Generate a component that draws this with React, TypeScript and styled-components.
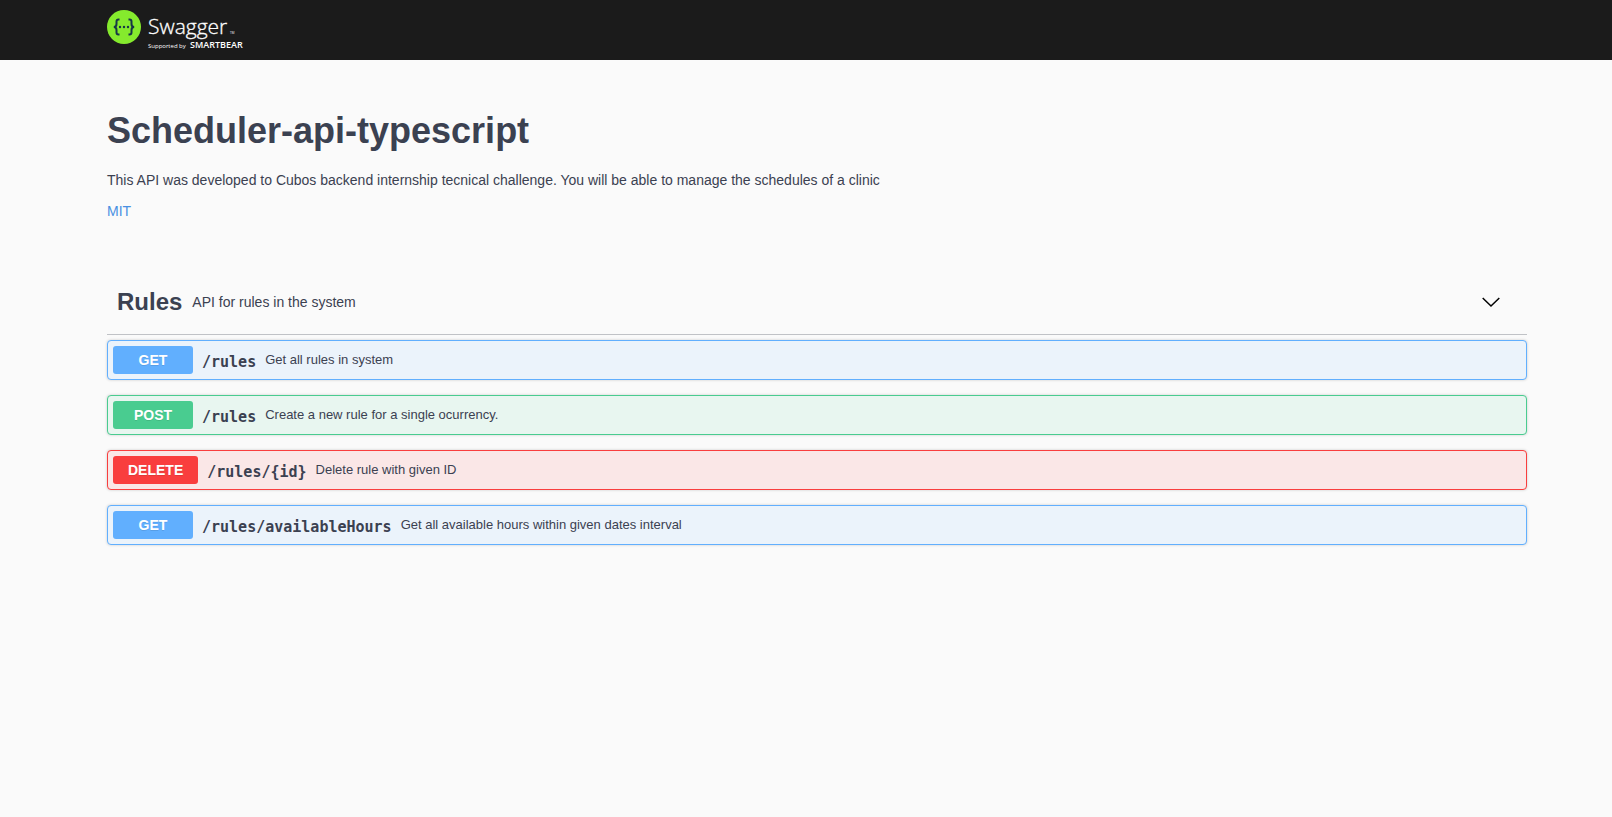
import React from "react";
import styled, { createGlobalStyle } from "styled-components";

type Method = "get" | "post" | "delete";

interface Operation {
  method: Method;
  path: string;
  summary: string;
}

const palette: Record<Method, { main: string; tint: string }> = {
  get: { main: "#61affe", tint: "#ebf3fb" },
  post: { main: "#49cc90", tint: "#e8f6f0" },
  delete: { main: "#f93e3e", tint: "#fae7e7" },
};

const operations: Operation[] = [
  { method: "get", path: "/rules", summary: "Get all rules in system" },
  { method: "post", path: "/rules", summary: "Create a new rule for a single ocurrency." },
  { method: "delete", path: "/rules/{id}", summary: "Delete rule with given ID" },
  {
    method: "get",
    path: "/rules/availableHours",
    summary: "Get all available hours within given dates interval",
  },
];

const GlobalStyle = createGlobalStyle`
  *, *::before, *::after { box-sizing: border-box; }
  body {
    margin: 0;
    background: #fafafa;
    color: #3b4151;
    font-family: Arial, "Liberation Sans", sans-serif;
    font-size: 14px;
  }
`;

const Topbar = styled.header`
  padding: 10px 0 10px 22px;
  background: #1b1b1b;
`;

const Wrapper = styled.div`
  width: 100%;
  max-width: 1460px;
  margin: 0 auto;
  padding: 0 20px;
`;

const LogoLink = styled.a`
  display: flex;
  width: fit-content;
`;

const LogoSvg = styled.svg`
  display: block;
  font-family: "Open Sans", sans-serif;
`;

const Main = styled.main`
  padding: 50px 0 50px 22px;
`;

const Info = styled.section`
  margin-bottom: 50px;
`;

const Title = styled.h1`
  margin: 0;
  font-size: 36px;
  line-height: 41px;
`;

const Description = styled.p`
  margin: 21px 0 15px;
  line-height: 16px;
`;

const License = styled.a`
  display: block;
  width: fit-content;
  color: #4990e2;
  line-height: 16px;
  text-decoration: none;
`;

const TagHeader = styled.div`
  display: flex;
  align-items: center;
  gap: 10px;
  height: 66px;
  margin-bottom: 5px;
  padding: 0 26px 0 10px;
  border-bottom: 1px solid rgba(59, 65, 81, 0.3);
`;

const TagName = styled.h2`
  margin: 0;
  font-size: 24px;
  line-height: 28px;
`;

const TagDescription = styled.p`
  flex: 1;
  margin: 0;
  line-height: 16px;
`;

const ToggleButton = styled.button`
  display: flex;
  padding: 0;
  border: 0;
  background: none;
  cursor: pointer;
`;

const OperationList = styled.div`
  display: flex;
  flex-direction: column;
  gap: 15px;
`;

const OperationRow = styled.button<{ $method: Method }>`
  display: flex;
  align-items: center;
  gap: 9px;
  width: 100%;
  padding: 5px;
  border: 1px solid ${({ $method }) => palette[$method].main};
  border-radius: 4px;
  background: ${({ $method }) => palette[$method].tint};
  box-shadow: 0 0 3px rgba(0, 0, 0, 0.19);
  color: inherit;
  font: inherit;
  text-align: left;
  cursor: pointer;
`;

const MethodBadge = styled.span<{ $method: Method }>`
  min-width: 80px;
  padding: 6px 15px;
  border-radius: 3px;
  background: ${({ $method }) => palette[$method].main};
  color: #fff;
  font-weight: 700;
  line-height: 16px;
  text-align: center;
  text-shadow: 0 1px 0 rgba(0, 0, 0, 0.1);
  text-transform: uppercase;
`;

const Path = styled.code`
  padding-top: 4px;
  font-family: Consolas, "DejaVu Sans Mono", monospace;
  font-size: 15px;
  font-weight: 700;
  line-height: 18px;
`;

const Summary = styled.span`
  font-size: 13px;
  line-height: 16px;
`;

const Logo = () => (
  <LogoSvg width="144" height="40" viewBox="0 0 144 40" role="img" aria-label="Swagger, supported by SmartBear">
    <circle cx="17" cy="17" r="17" fill="#85ea2d" />
    <g fill="none" stroke="#173647" strokeWidth="2">
      <path d="M12.5 9.5h-1q-2 0-2 2v2.6q0 2.9-2.7 2.9 2.7 0 2.7 2.9v2.6q0 2 2 2h1" />
      <path d="M21.5 9.5h1q2 0 2 2v2.6q0 2.900 2.700 2.900-2.700 0-2.700 2.900v2.600q0 2-2 2h-1" />
    </g>
    <g fill="#173647">
      <circle cx="13" cy="17" r="1.2" />
      <circle cx="17" cy="17" r="1.2" />
      <circle cx="21" cy="17" r="1.2" />
    </g>
    <g fill="#fff">
      <text x="41" y="24" fontSize="21" fontWeight="300" stroke="#fff" strokeWidth="0.3">
        Swagger
      </text>
      <text x="123" y="24" fontSize="3">TM</text>
      <text x="41" y="38" fontSize="6">Supported by</text>
      <text x="83" y="38" fontSize="9" fontWeight="600">SMARTBEAR</text>
    </g>
  </LogoSvg>
);

export default function App() {
  return (
    <>
      <GlobalStyle />
      <Topbar>
        <Wrapper>
          <LogoLink href="#">
            <Logo />
          </LogoLink>
        </Wrapper>
      </Topbar>
      <Main>
        <Wrapper>
          <Info>
            <Title>Scheduler-api-typescript</Title>
            <Description>
              This API was developed to Cubos backend internship tecnical challenge. You will be able to manage the
              schedules of a clinic
            </Description>
            <License href="#license">MIT</License>
          </Info>
          <section>
            <TagHeader>
              <TagName>Rules</TagName>
              <TagDescription>API for rules in the system</TagDescription>
              <ToggleButton type="button" aria-label="Collapse Rules" aria-expanded="true">
                <svg width="20" height="20" viewBox="0 0 20 20" fill="none" stroke="#000" strokeWidth="1.5">
                  <path d="M1.7 6 10 14 18.3 6" />
                </svg>
              </ToggleButton>
            </TagHeader>
            <OperationList>
              {operations.map(({ method, path, summary }) => (
                <OperationRow key={method + path} type="button" $method={method}>
                  <MethodBadge $method={method}>{method}</MethodBadge>
                  <Path>{path}</Path>
                  <Summary>{summary}</Summary>
                </OperationRow>
              ))}
            </OperationList>
          </section>
        </Wrapper>
      </Main>
    </>
  );
}
